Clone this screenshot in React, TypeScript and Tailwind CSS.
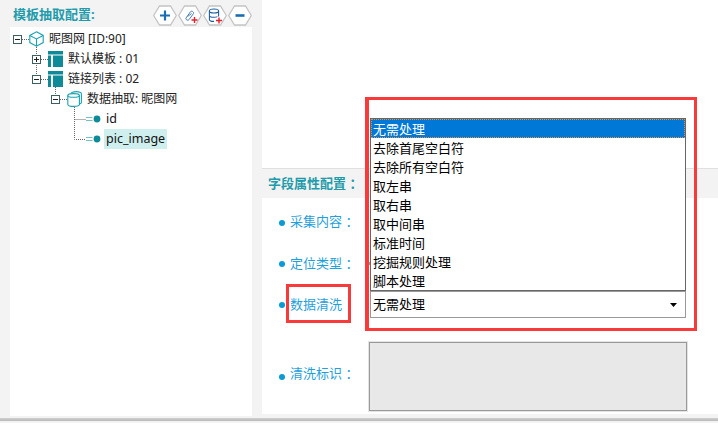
import React from 'react';

const FONT = '"Noto Sans", "Noto Sans CJK SC", sans-serif';

const cleanOptions = ['无需处理', '去除首尾空白符', '去除所有空白符', '取左串', '取右串', '取中间串', '标准时间', '挖掘规则处理', '脚本处理'];

const Hex = ({ children }: { children?: React.ReactNode }) => (
  <svg width="24" height="21" viewBox="0 0 24 21" className="block">
    <path d="M6.5 1H17.5L23.3 10.5L17.5 20H6.5L0.7 10.5Z" fill="#fff" stroke="#c4c4c4" strokeWidth="1.3" />
    {children}
  </svg>
);

const RedPlus = ({ x, y }: { x: number; y: number }) => (
  <path d={`M${x - 3} ${y}H${x + 3}M${x} ${y - 3}V${y + 3}`} stroke="#e8202c" strokeWidth="1.4" fill="none" />
);

const Expander = ({ open }: { open: boolean }) => (
  <svg width="9" height="9" viewBox="0 0 9 9" className="block shrink-0">
    <rect x="0.5" y="0.5" width="8" height="8" fill="#fff" stroke="#3d5f5f" />
    <path d={open ? 'M2 4.5H7' : 'M2 4.5H7M4.5 2V7'} stroke="#222" />
  </svg>
);

const CubeIcon = () => (
  <svg width="15" height="16" viewBox="0 0 15 16" className="block shrink-0" fill="none" stroke="#1aa3b2" strokeWidth="1.1">
    <path d="M7.5 0.8L14.2 4.4V11.6L7.5 15.2L0.8 11.6V4.4Z" />
    <path d="M0.8 4.4L7.5 8L14.2 4.4M7.5 8V15.2" />
  </svg>
);

const TableIcon = () => (
  <svg width="15" height="16" viewBox="0 0 15 16" className="block shrink-0" fill="#0e8b98">
    <rect x="0" y="0" width="15" height="3.5" />
    <rect x="0" y="4.5" width="3" height="11.5" />
    <rect x="5" y="4.5" width="10" height="11.5" />
  </svg>
);

const DbIcon = () => (
  <svg width="15" height="16" viewBox="0 0 15 16" className="block shrink-0" fill="none" stroke="#1aa3b2" strokeWidth="1.1">
    <path d="M4 2.6C4 1.4 6.5 0.6 9.2 0.6C12 0.6 14.4 1.4 14.4 2.6V11.4C14.4 12.2 13.6 12.7 12.5 13" />
    <path d="M0.8 4.4C0.8 3.3 3.2 2.6 6.5 2.6C9.8 2.6 12.4 3.3 12.4 4.4V13.6C12.4 14.7 9.8 15.4 6.5 15.4C3.2 15.4 0.8 14.7 0.8 13.6Z" />
    <path d="M0.8 4.4C0.8 5.5 3.2 6.2 6.5 6.2C9.8 6.2 12.4 5.5 12.4 4.4" />
  </svg>
);

const LeafIcon = () => (
  <svg width="15" height="8" viewBox="0 0 15 8" className="block shrink-0">
    <path d="M0 2.5H6.5M0 5.5H6.5" stroke="#6fc2c8" strokeWidth="1.2" />
    <circle cx="11" cy="4" r="3.4" fill="#0e8b98" />
  </svg>
);

const TreeRow = ({ indent, open, icon, children }: { indent: string; open: boolean; icon: React.ReactNode; children: React.ReactNode }) => (
  <div className={`flex h-5 items-center ${indent}`}>
    <Expander open={open} />
    <span className="ml-[7px]">{icon}</span>
    <span className="ml-[5px] text-[12px] leading-5 text-[#222] whitespace-nowrap">{children}</span>
  </div>
);

const LeafRow = ({ selected, children }: { selected?: boolean; children: React.ReactNode }) => (
  <div className="flex h-5 items-center pl-[76px]">
    <LeafIcon />
    <span className={`ml-[3px] px-[2px] text-[12.5px] leading-5 text-[#111] ${selected ? 'bg-[#cfeeee]' : ''}`}>{children}</span>
  </div>
);

const FormRow = ({ label, labelWidth, className, children }: { label: string; labelWidth: string; className: string; children?: React.ReactNode }) => (
  <div className={`flex items-center pl-[17px] ${className}`}>
    <span className="h-[6px] w-[6px] shrink-0 rounded-full bg-[#0a9ad6]" />
    <span className={`ml-[5px] shrink-0 text-[13px] whitespace-nowrap text-[#1f9fdc] ${labelWidth}`}>{label}</span>
    {children}
  </div>
);

export default function App() {
  return (
    <div className="relative h-[423px] w-[718px] overflow-hidden bg-[#f3f3f3]" style={{ fontFamily: FONT }}>
      <div className="flex h-[416px]">
        {/* left: template tree */}
        <div className="flex w-[262px] shrink-0 flex-col pl-[10px] pr-[10px]">
          <div className="flex h-[27px] items-center justify-between pl-[3px] pt-[3px]">
            <span className="text-[13px] font-bold text-[#1f9bab]">模板抽取配置:</span>
            <div className="flex gap-[1px]">
              <Hex>
                <path d="M7 10.5H17M12 5.5V15.5" stroke="#1b6db3" strokeWidth="2.2" />
              </Hex>
              <Hex>
                <path d="M8 13L12.5 6.7C13.6 5.3 16.4 7.1 15.4 8.7L11 14.7C9.8 16.1 7 14.5 8 13Z M9.6 11.5L13.6 8.5" fill="none" stroke="#4a7fb8" strokeWidth="1" />
                <RedPlus x={16.5} y={15} />
              </Hex>
              <Hex>
                <ellipse cx="11" cy="6" rx="4.6" ry="2" fill="none" stroke="#1b5f9e" strokeWidth="1.1" />
                <path d="M6.4 6V14.4C6.4 15.6 8.4 16.4 11 16.4M15.6 6V11.4M6.4 10.4C6.4 11.5 8.4 12.3 11 12.3C12.4 12.3 13.6 12.1 14.4 11.6" fill="none" stroke="#1b5f9e" strokeWidth="1.1" />
                <RedPlus x={16} y={15.5} />
              </Hex>
              <Hex>
                <path d="M7.5 10.5H16.5" stroke="#1b6db3" strokeWidth="2.6" />
              </Hex>
            </div>
          </div>
          <div className="relative flex-1 bg-white pt-[2px]">
            {/* tree connector lines */}
            <svg className="absolute left-0 top-0" width="100" height="125" fill="none" stroke="#666" strokeDasharray="1 1">
              <path d="M12 12.5H19M26.5 20V48M31 32.5H38M31 52.5H38M45.5 60V67M50 72.5H57M64.5 80V112.5H76M64.5 92.5H76" />
            </svg>
            <div className="relative">
              <TreeRow indent="pl-[3px]" open icon={<CubeIcon />}>昵图网 [ID:90]</TreeRow>
              <TreeRow indent="pl-[22px]" open={false} icon={<TableIcon />}>默认模板 : 01</TreeRow>
              <TreeRow indent="pl-[22px]" open icon={<TableIcon />}>链接列表 : 02</TreeRow>
              <TreeRow indent="pl-[41px]" open icon={<DbIcon />}>数据抽取: 昵图网</TreeRow>
              <LeafRow>id</LeafRow>
              <LeafRow selected>pic_image</LeafRow>
            </div>
          </div>
        </div>

        {/* right: field properties */}
        <div className="flex flex-1 flex-col">
          <div className="h-[168px] bg-white" />
          <div className="flex h-[30px] items-center border-t border-[#e0e0e0] pl-[6px]">
            <span className="text-[13px] font-bold text-[#1f9bab]">字段属性配置 ：</span>
          </div>
          <div className="mb-[2px] flex-1 bg-white pt-[4px]">
            <FormRow label="采集内容 ：" labelWidth="w-[80px] -mt-[1px]" className="h-[41px]" />
            <FormRow label="定位类型 ：" labelWidth="w-[79px]" className="h-[41px]">
              <span className="h-[3px] w-px bg-[#999]" />
            </FormRow>
            <FormRow label="数据清洗" labelWidth="w-[80px]" className="h-[41px]">
              <div className="flex h-[27px] w-[316px] items-center justify-between border border-[#999] bg-white pl-[2px] pr-[8px] pt-[1px] text-[13px] text-black">
                <span>无需处理</span>
                <svg width="7" height="4" viewBox="0 0 7 4" className="block">
                  <path d="M0 0H7L3.5 4Z" fill="#000" />
                </svg>
              </div>
            </FormRow>
            <FormRow label="清洗标识 ：" labelWidth="w-[79px] -mt-[5px]" className="mt-[17px] h-[69px]">
              <div className="h-[69px] w-[318px] border border-[#999] bg-[#e8e8e8] outline outline-1 outline-[#e4e4e4]" />
            </FormRow>
          </div>
        </div>
      </div>

      {/* window bottom edge */}
      <div className="mt-[2px] h-[3px] bg-gradient-to-b from-[#d0d0d0] to-[#b8b8b8]" />

      {/* open dropdown list */}
      <div className="absolute left-[370px] top-[118px] w-[316px] border border-[#666] bg-white text-[13px] leading-[19px] text-black">
        {cleanOptions.map((opt, i) => (
          <div
            key={opt}
            className={`h-[19px] px-[2px] pt-[1px] whitespace-nowrap ${i === 0 ? 'bg-[#0078d7] text-white outline-1 -outline-offset-1 outline-dotted outline-[#e8913a]' : ''}`}
          >
            {opt}
          </div>
        ))}
      </div>

      {/* red annotation boxes */}
      <div className="absolute left-[365px] top-[97px] h-[234px] w-[332px] border-[3px] border-l-4 border-[#f93a3a]" />
      <div className="absolute left-[286px] top-[284px] h-[39px] w-[65px] border-[3px] border-[#f93a3a]" />
    </div>
  );
}
